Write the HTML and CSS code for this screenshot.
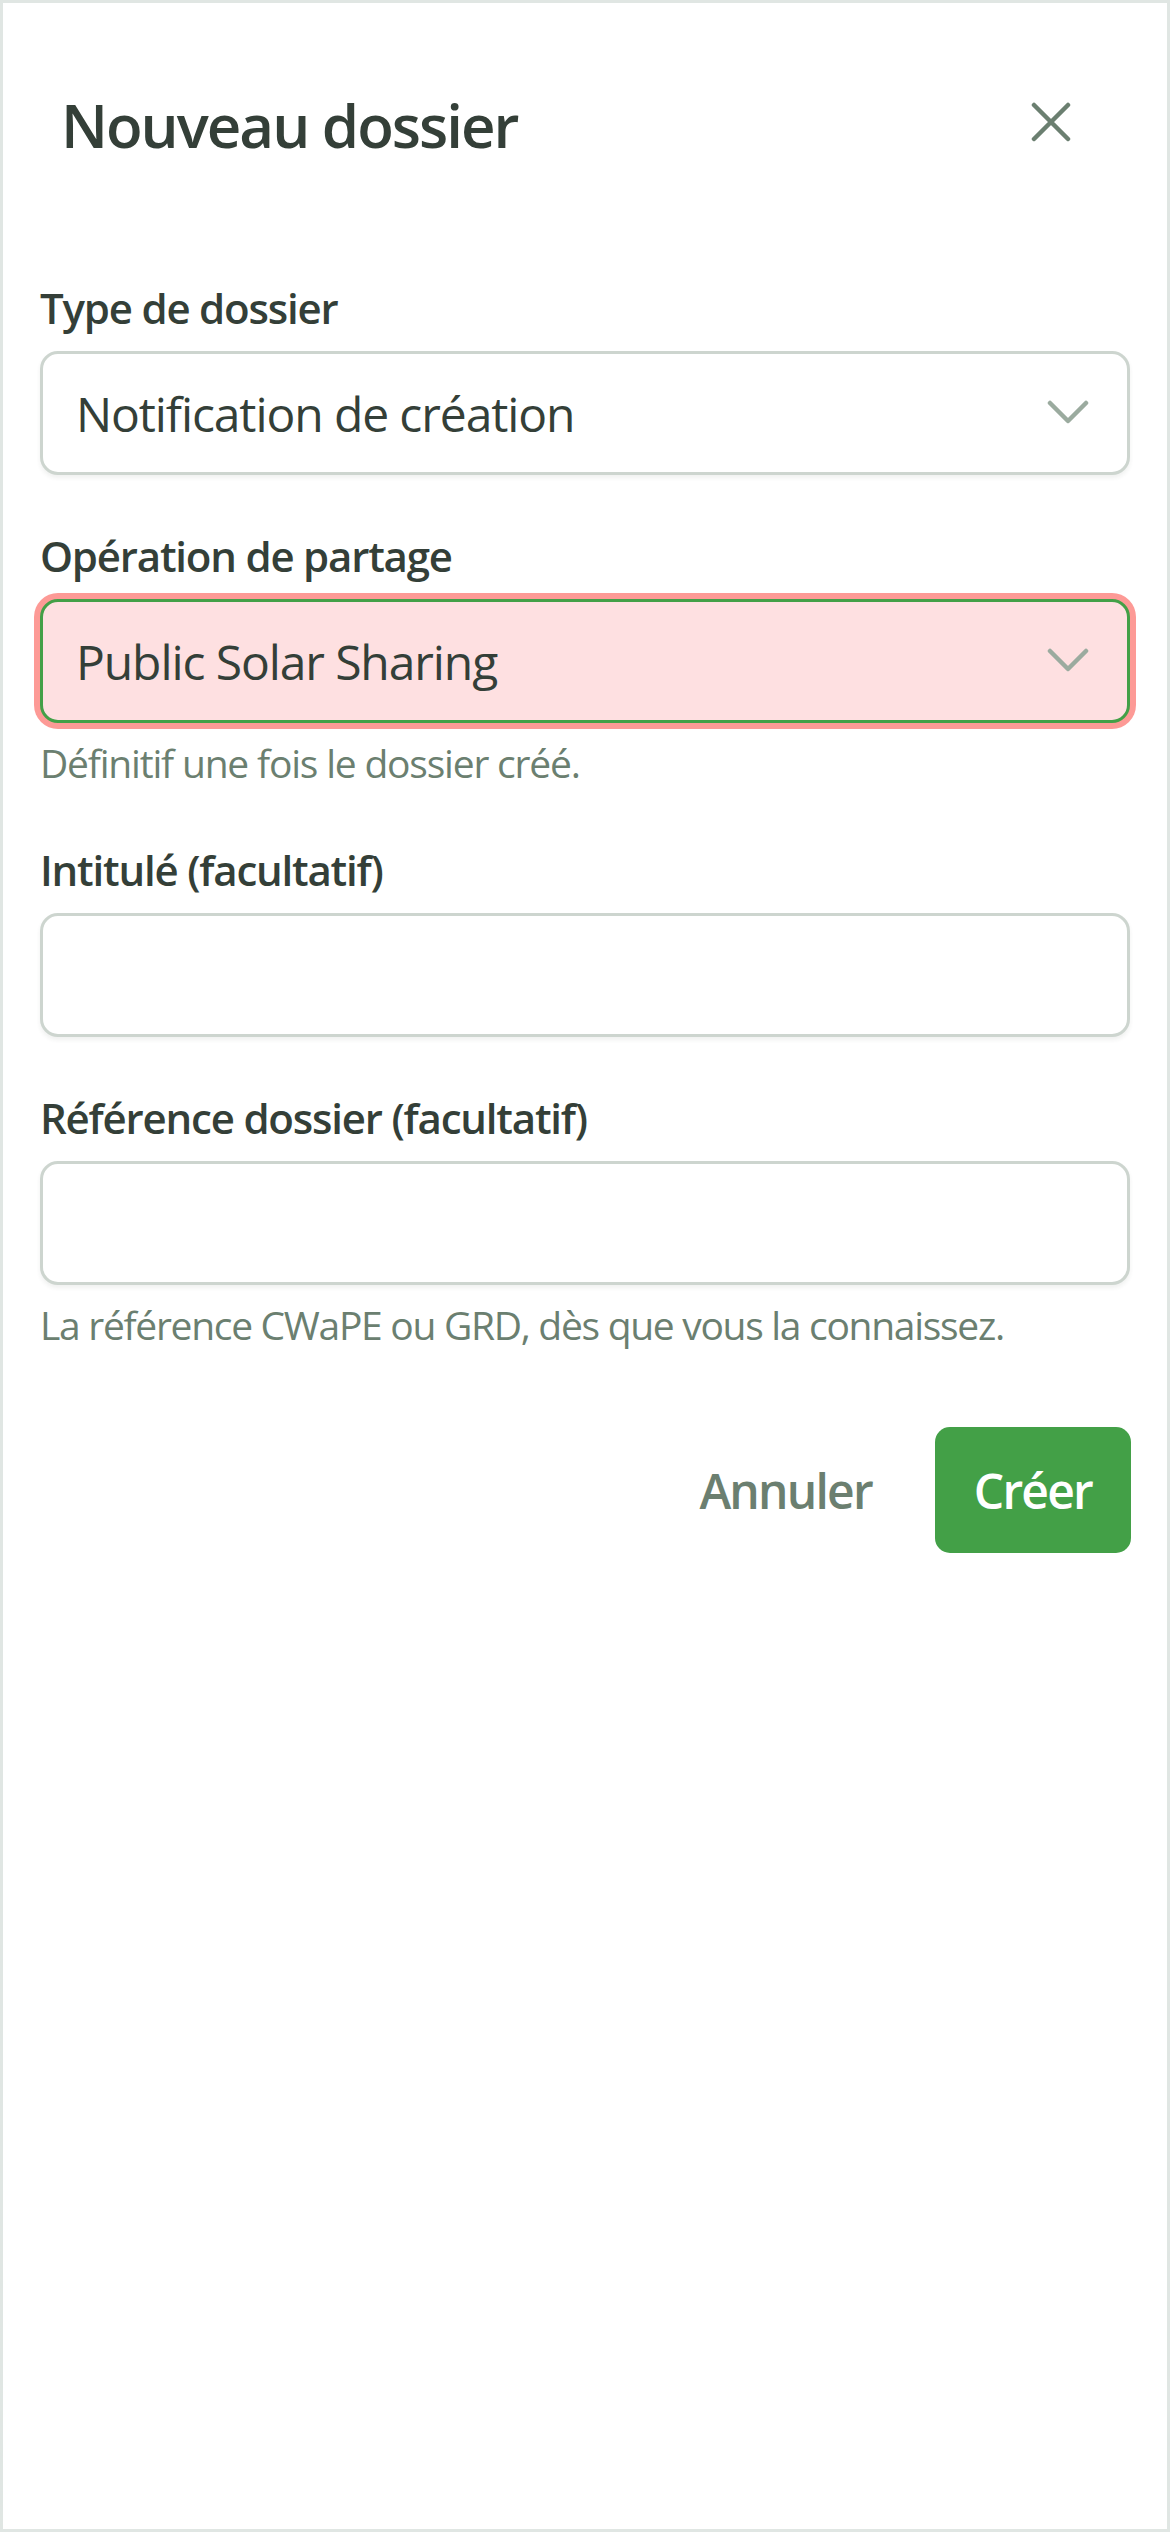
FILE: index.html
```html
<!DOCTYPE html>
<html lang="fr">
<head>
<meta charset="utf-8">
<title>Nouveau dossier</title>
<link rel="stylesheet" href="styles.css">
</head>
<body>
<div class="sheet">
  <header class="sheet-header">
    <h1 class="sheet-title">Nouveau dossier</h1>
    <button class="close-btn" type="button" aria-label="Fermer">
      <svg class="close-icon" width="40" height="40" viewBox="0 0 40 40"><path d="M3 3 L37 37 M37 3 L3 37"/></svg>
    </button>
  </header>

  <form class="form">
    <div class="field">
      <label class="field-label">Type de dossier</label>
      <div class="select">
        <span class="select-value">Notification de création</span>
        <svg class="chevron" width="42" height="26" viewBox="0 0 42 26"><path d="M3 3 L21 21 L39 3"/></svg>
      </div>
    </div>

    <div class="field field--hint">
      <label class="field-label">Opération de partage</label>
      <div class="select select--error">
        <span class="select-value">Public Solar Sharing</span>
        <svg class="chevron" width="42" height="26" viewBox="0 0 42 26"><path d="M3 3 L21 21 L39 3"/></svg>
      </div>
      <p class="field-hint">Définitif une fois le dossier créé.</p>
    </div>

    <div class="field">
      <label class="field-label">Intitulé (facultatif)</label>
      <div class="input"></div>
    </div>

    <div class="field field--hint">
      <label class="field-label">Référence dossier (facultatif)</label>
      <div class="input"></div>
      <p class="field-hint field-hint--long">La référence CWaPE ou GRD, dès que vous la connaissez.</p>
    </div>
  </form>

  <div class="actions">
    <button class="btn btn-ghost" type="button">Annuler</button>
    <button class="btn btn-primary" type="button">Créer</button>
  </div>
</div>
</body>
</html>
```

FILE: styles.css
```css
* {
  box-sizing: border-box;
}

html, body {
  margin: 0;
  padding: 0;
}

body {
  background: #ffffff;
  font-family: "Open Sans", "Noto Sans", "Liberation Sans", sans-serif;
  color: #343f38;
}

.sheet {
  min-height: 2532px;
  border: 3px solid #e0e6e3;
  background: #ffffff;
  padding: 79px 36px 0 37px;
}

.sheet-header {
  display: flex;
  align-items: center;
  justify-content: space-between;
  padding-left: 21px;
  padding-right: 40px;
  margin-bottom: 113px;
}

.sheet-title {
  margin: 0;
  font-size: 60px;
  line-height: 72px;
  font-weight: 600;
  letter-spacing: -2px;
  color: #343f38;
}

.close-btn {
  width: 80px;
  height: 80px;
  margin-bottom: 5px;
  padding: 0;
  border: 0;
  background: transparent;
  display: flex;
  align-items: center;
  justify-content: center;
}

.close-icon path {
  fill: none;
  stroke: #6b7f70;
  stroke-width: 4.5;
  stroke-linecap: round;
}

.form {
  display: flex;
  flex-direction: column;
  padding-right: 1px;
}

.field + .field {
  margin-top: 53px;
}

.field--hint + .field {
  margin-top: 51px;
}

.field-label {
  display: block;
  font-size: 42px;
  line-height: 56px;
  font-weight: 600;
  letter-spacing: -1.2px;
  color: #343f38;
  margin-bottom: 15px;
}

.select,
.input {
  height: 124px;
  border: 3px solid #cdd5cf;
  border-radius: 18px;
  background: #ffffff;
  box-shadow: 0 3px 4px rgba(40, 60, 45, 0.07);
}

.select {
  display: flex;
  align-items: center;
  justify-content: space-between;
  padding: 0 38px 0 33px;
}

.select--error {
  background: #fee0e1;
  border-color: #43a047;
  box-shadow: 0 0 0 6px #fd9a96;
}

.select-value {
  font-size: 48px;
  letter-spacing: -1.1px;
  color: #343f38;
}

.chevron path {
  fill: none;
  stroke: #9bab9f;
  stroke-width: 4.5;
  stroke-linecap: round;
  stroke-linejoin: round;
}

.field-hint {
  margin: 12px 0 0 0;
  font-size: 39px;
  line-height: 56px;
  letter-spacing: -1.2px;
  color: #6b7f70;
}

.field-hint--long {
  letter-spacing: -1.3px;
}

.actions {
  display: flex;
  justify-content: flex-end;
  align-items: center;
  gap: 33px;
  margin-top: 74px;
}

.btn {
  height: 126px;
  border: 0;
  font-family: inherit;
  font-size: 48px;
  font-weight: 600;
  letter-spacing: -1.8px;
  border-radius: 15px;
  padding: 0 30px;
  background: transparent;
}

.btn-ghost {
  color: #6b7f70;
}

.btn-primary {
  background: #43a047;
  color: #ffffff;
  padding: 0 39px;
}
```
